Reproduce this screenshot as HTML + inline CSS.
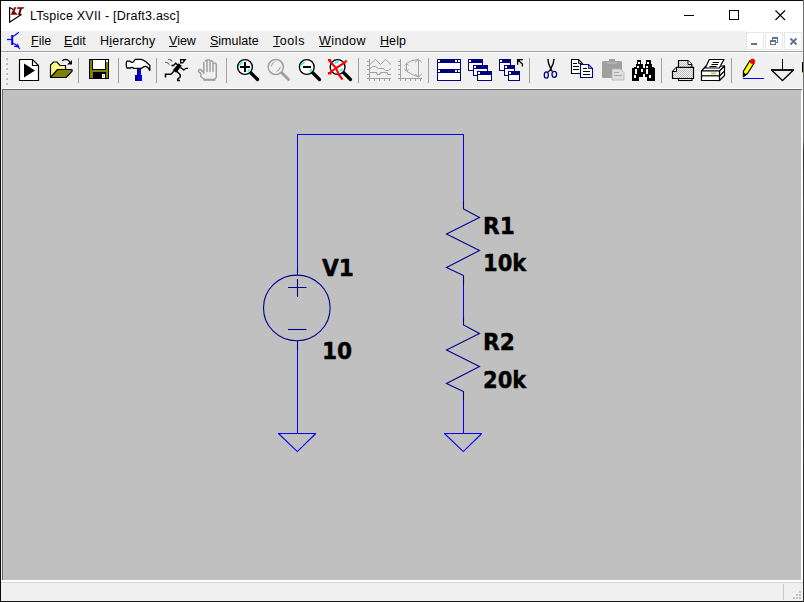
<!DOCTYPE html>
<html>
<head>
<meta charset="utf-8">
<title>LTspice XVII - [Draft3.asc]</title>
<style>
html,body{margin:0;padding:0;}
body{width:804px;height:602px;overflow:hidden;background:#fff;font-family:"Liberation Sans",sans-serif;}
#win{position:absolute;left:0;top:0;width:804px;height:602px;background:#fff;overflow:hidden;}
.abs{position:absolute;}
#bl{left:0;top:0;width:1px;height:602px;background:#0c0c10;}
#bt{left:0;top:0;width:804px;height:1px;background:#0c0c10;}
#br{left:803px;top:0;width:1px;height:602px;background:linear-gradient(#707070 0,#707070 140px,#303030 150px,#404040 200px,#2a2a2a 100%);}
#bb{left:0;top:601px;width:804px;height:1px;background:#1a1418;}
#title{left:30px;top:8px;font-size:12.5px;line-height:16px;color:#000;white-space:nowrap;letter-spacing:0.23px;}
#menubar{left:1px;top:31px;width:745px;height:20px;background:#f0f0f0;}
.mi{position:absolute;top:34px;font-size:12.5px;line-height:14px;color:#000;white-space:nowrap;}
.mi u{text-decoration:underline;text-underline-offset:1px;}
#sep1{left:1px;top:51px;width:802px;height:1px;background:#a0a0a0;}
#sep2{left:1px;top:52px;width:802px;height:1px;background:#fff;}
#toolbar{left:1px;top:53px;width:802px;height:35px;background:#f0f0f0;border-bottom:1px solid #fff;}
#canvas{left:3px;top:90px;width:798px;height:490px;background:#c0c0c0;}
#cvt{left:2px;top:89px;width:800px;height:1px;background:#696969;}
#cvl{left:2px;top:89px;width:1px;height:491px;background:#696969;}
#cvl0{left:1px;top:89px;width:1px;height:492px;background:#f0f0f0;}
#status{left:1px;top:582px;width:802px;height:19px;background:#f0f0f0;}
#stl{left:1px;top:582px;width:802px;height:1px;background:#d7d7d7;}
#stsep{left:783px;top:584px;width:1px;height:16px;background:#c8c8c8;}
.mdi{position:absolute;top:32px;width:16px;height:16px;border:1px solid #e6e6e6;background:#fff;}
svg{position:absolute;left:0;top:0;overflow:visible;}
.sch{font-family:"DejaVu Sans Condensed","DejaVu Sans","Liberation Sans",sans-serif;font-weight:bold;font-size:23px;fill:#000;stroke:#000;stroke-width:0.35px;}
</style>
</head>
<body>
<div id="win">
  <div class="abs" id="title">LTspice XVII - [Draft3.asc]</div>

  <div class="abs" id="menubar"></div>
  <div class="mi" style="left:31px"><u>F</u>ile</div>
  <div class="mi" style="left:64px;letter-spacing:0.08px"><u>E</u>dit</div>
  <div class="mi" style="left:100px;letter-spacing:0.22px">H<u>i</u>erarchy</div>
  <div class="mi" style="left:169px"><u>V</u>iew</div>
  <div class="mi" style="left:210px"><u>S</u>imulate</div>
  <div class="mi" style="left:273px;letter-spacing:0.56px"><u>T</u>ools</div>
  <div class="mi" style="left:319px;letter-spacing:0.4px"><u>W</u>indow</div>
  <div class="mi" style="left:380px;letter-spacing:0.08px"><u>H</u>elp</div>

  <div class="mdi" style="left:746px"></div>
  <div class="mdi" style="left:765px"></div>
  <div class="mdi" style="left:784px"></div>

  <div class="abs" id="sep1"></div>
  <div class="abs" id="sep2"></div>
  <div class="abs" id="toolbar"></div>

  <div class="abs" id="cvl0"></div>
  <div class="abs" id="cvt"></div>
  <div class="abs" id="cvl"></div>
  <div class="abs" id="canvas"></div>

  <div class="abs" id="status"></div>
  <div class="abs" id="stl"></div>
  <div class="abs" id="stsep"></div>

  <!-- ICONS_BEGIN --><svg width="804" height="602" viewBox="0 0 804 602">
    <defs>
      <pattern id="dy" width="2" height="2" patternUnits="userSpaceOnUse"><rect width="2" height="2" fill="#ffff00"/><rect width="1" height="1" fill="#fff"/><rect x="1" y="1" width="1" height="1" fill="#fff"/></pattern>
      <pattern id="dg" width="2" height="2" patternUnits="userSpaceOnUse"><rect width="2" height="2" fill="#fff"/><rect width="1" height="1" fill="#b8b8b8"/><rect x="1" y="1" width="1" height="1" fill="#b8b8b8"/></pattern>
    </defs>
    <!-- gripper -->
    <g shape-rendering="crispEdges">
      <g fill="#fff"><rect x="5" y="57" width="2" height="2"/><rect x="5" y="62" width="2" height="2"/><rect x="5" y="67" width="2" height="2"/><rect x="5" y="72" width="2" height="2"/><rect x="5" y="77" width="2" height="2"/><rect x="5" y="82" width="2" height="2"/></g>
      <g fill="#bcbcbc"><rect x="6" y="58" width="2" height="2"/><rect x="6" y="63" width="2" height="2"/><rect x="6" y="68" width="2" height="2"/><rect x="6" y="73" width="2" height="2"/><rect x="6" y="78" width="2" height="2"/><rect x="6" y="83" width="2" height="2"/></g>
      <!-- separators -->
      <g fill="#a0a0a0">
        <rect x="78" y="58" width="1" height="25"/><rect x="118" y="58" width="1" height="25"/><rect x="156" y="58" width="1" height="25"/><rect x="226" y="58" width="1" height="25"/><rect x="358" y="58" width="1" height="25"/><rect x="428" y="58" width="1" height="25"/><rect x="529" y="58" width="1" height="25"/><rect x="661" y="58" width="1" height="25"/><rect x="731" y="58" width="1" height="25"/>
      </g>
    </g>
    <!-- run -->
    <g>
      <path d="M19.5 59.5 H32.5 L38.5 65.5 V80.5 H19.5 Z" fill="#fff" stroke="#000" stroke-width="1.2"/>
      <path d="M32.5 59.5 V65.5 H38.5" fill="none" stroke="#000" stroke-width="1.2"/>
      <path d="M24 63.5 L35 70.5 L24 77.5 Z" fill="#000"/>
    </g>
    <!-- open -->
    <g>
      <path d="M50.5 77.5 V65 L53.5 62 H57 L60 65.5 H65.5 V70" fill="url(#dy)" stroke="#000" stroke-width="1.2"/>
      <path d="M50.5 77.5 L57.5 69.5 H72 V71.3 L66 77.5 Z" fill="#808000" stroke="#000" stroke-width="1.2" stroke-linejoin="round"/>
      <path d="M62.5 61 Q63 59.3 65.5 59.3 Q69.5 59.5 70 63.5" fill="none" stroke="#000" stroke-width="1.3"/>
      <path d="M67 64.5 H72 V60 Z" fill="#000"/>
    </g>
    <!-- save -->
    <g shape-rendering="crispEdges">
      <rect x="89" y="59" width="20" height="20" fill="#000"/>
      <rect x="90" y="60" width="18" height="18" fill="#808000"/>
      <rect x="92" y="59" width="14" height="11" fill="#000"/>
      <rect x="93" y="60" width="12" height="9" fill="#fff"/>
      <rect x="106" y="60" width="2" height="2" fill="#fff"/>
      <rect x="105" y="59" width="1" height="11" fill="#000"/>
      <rect x="93" y="72" width="13" height="7" fill="#000"/>
      <rect x="102" y="74" width="3" height="4" fill="#fff"/>
      <rect x="103" y="75" width="1" height="2" fill="#c0c0c0"/>
    </g>
    <!-- hammer -->
    <g>
      <path d="M127 61.2 H130 Q131.5 62.8 133 62.2 L135.3 59.4 H141.6 Q147 61.5 149.8 65.4 V70.6 Q148.5 67.6 146.2 66.4 Q144 66 141.5 68.3 H133.5 Q132 66.6 130.5 68 H127 Q126.2 67.5 126.3 64.6 Q126.2 61.6 127 61.2 Z" fill="#fff" stroke="#000" stroke-width="1.3" stroke-linejoin="round"/>
      <g shape-rendering="crispEdges">
        <rect x="137" y="69" width="2" height="6" fill="#000080"/><rect x="139" y="69" width="2" height="6" fill="#0000ff"/>
        <rect x="135" y="75" width="4" height="6" fill="#000080"/><rect x="139" y="75" width="3" height="6" fill="#0000ff"/>
      </g>
    </g>
    <!-- runner -->
    <g fill="none" stroke="#000" stroke-linecap="square">
      <path d="M180 59 H186.5 L183 63.5 H180 Z" fill="#000" stroke="none"/>
      <rect x="181.3" y="60.3" width="1.8" height="1.8" fill="#fff" stroke="none"/>
      <path d="M180.2 64.5 L174.5 71.3" stroke-width="4.2" stroke-linecap="butt"/>
      <path d="M178 65.3 L175.7 63.2 L173.5 65.5 H172" stroke-width="1.3"/>
      <path d="M181 67.8 L183.8 70 L186 68.3 H187.3" stroke-width="1.3"/>
      <path d="M174 71 L171 74.3 H165.5 V76.8" stroke-width="1.5"/>
      <path d="M177 71.5 L180.2 74.8 V77 L177.7 79.2 V80.4 H179.3" stroke-width="1.5"/>
      <path d="M168 59.5 H170.3 L172.3 61.5 M165 62.5 H167.3 L169.5 64.7" stroke="#707070" stroke-width="1.1" stroke-linecap="butt"/>
    </g>
    <!-- hand (disabled) -->
    <g fill="none" stroke="#a0a0a0" stroke-width="1.5" stroke-linecap="round" stroke-linejoin="round">
      <path d="M203.8 73 V62.5"/>
      <path d="M207 71.5 V60.5 Q208.5 59 210 60.5 V71.5"/>
      <path d="M205.5 61 Q206 59.8 207 60.5"/>
      <path d="M213 71.5 V62 L211.5 60.5"/>
      <path d="M214 63.3 H215.5 L216.3 64.5 V77.5 L214.8 79"/>
      <path d="M203.5 79.8 H215.5" stroke-width="2.2" stroke-linecap="butt"/>
      <path d="M203.8 72.6 L200.8 69.6 H199 L198.3 70.8 L199.3 72.3 L200.8 73.4 V76.5 L203.8 79"/>
    </g>
    <!-- zoom in -->
    <g>
      <path d="M250.5 72.5 L257.5 79.5" stroke="#000" stroke-width="3.2" stroke-linecap="round"/>
      <circle cx="245" cy="67" r="7.4" fill="#fff" stroke="#000" stroke-width="1.4"/>
      <path d="M239 65.5 L242.5 62" stroke="#00ffff" stroke-width="1.6"/>
      <path d="M247.5 71.5 L250 69.5" stroke="#00ffff" stroke-width="1.6"/>
      <path d="M240 67 H250 M245 62 V72" stroke="#000" stroke-width="2"/>
    </g>
    <!-- zoom grey -->
    <g>
      <path d="M281.5 72.5 L288.5 79.5" stroke="#a0a0a0" stroke-width="3" stroke-linecap="round"/>
      <circle cx="275.8" cy="67" r="7.6" fill="#f0f0f0" stroke="#a0a0a0" stroke-width="1.5"/>
      <path d="M271.5 66.5 Q271.5 63 274.5 62" fill="none" stroke="#a0a0a0" stroke-width="1"/>
      <path d="M276.5 71.5 Q279.5 71 280.5 66.5" fill="none" stroke="#a0a0a0" stroke-width="1"/>
    </g>
    <!-- zoom out -->
    <g>
      <path d="M312.5 72.5 L319.5 79.5" stroke="#000" stroke-width="3.2" stroke-linecap="round"/>
      <circle cx="306.8" cy="67" r="7.4" fill="#fff" stroke="#000" stroke-width="1.4"/>
      <path d="M300.5 65.5 L304.5 62" stroke="#00ffff" stroke-width="1.6"/>
      <path d="M309.5 71.5 L312 69.3" stroke="#00ffff" stroke-width="1.6"/>
      <path d="M303 67 H311" stroke="#000" stroke-width="2"/>
    </g>
    <!-- zoom fit (red X) -->
    <g>
      <path d="M343.5 72.5 L350.5 79.5" stroke="#000" stroke-width="3.2" stroke-linecap="round"/>
      <circle cx="337.6" cy="67" r="7.4" fill="#fff" stroke="#000" stroke-width="1.4"/>
      <path d="M334.5 63.5 Q336 62 338.5 62.3" fill="none" stroke="#00ffff" stroke-width="1.5"/>
      <path d="M339.5 71.5 L342.5 68.5" stroke="#00ffff" stroke-width="1.5"/>
      <path d="M328.5 59.5 L336 68 L339 75 L342.5 79.5" fill="none" stroke="#ff0000" stroke-width="2.1"/>
      <path d="M346.5 60.3 L345 62.5 L336 68 L329 73.5" fill="none" stroke="#ff0000" stroke-width="2.1"/>
      <rect x="328" y="59" width="3" height="2.2" fill="#ff0000"/>
      <rect x="328" y="72" width="3.5" height="2.5" fill="#ff0000"/>
    </g>
    <!-- graph 1 (disabled) -->
    <g fill="none" stroke="#a0a0a0" stroke-width="1">
      <g shape-rendering="crispEdges">
        <path d="M369.5 59 V81 M367 78.5 H391"/>
        <path d="M367 61.5 H369 M367 65.5 H369 M367 69.5 H369 M367 74.5 H369"/>
        <path d="M374.5 79 V81 M379.5 79 V81 M384.5 79 V81 M389.5 79 V81"/>
      </g>
      <path d="M370 64.5 L375.5 59.3 L380.5 64.5 L385.5 59.3 L391 64.5"/>
      <path d="M370 68.7 L372.8 66.5 H375.8 L378.3 68.5 H383 L385.8 70.5 H388.2 L391 68.5"/>
      <path d="M370 72.5 H376.3 L377.3 74.5 H379.5 L380.5 72.5 H387 L388 74.5 H391" stroke-width="1.2"/>
    </g>
    <!-- graph 2 (disabled) -->
    <g fill="none" stroke="#a0a0a0" stroke-width="1">
      <g shape-rendering="crispEdges">
        <path d="M400.5 59 V81 M398 78.5 H422"/>
        <path d="M398 61.5 H400 M398 65.5 H400 M398 69.5 H400 M398 74.5 H400"/>
        <path d="M405.5 79 V81 M410.5 79 V81 M415.5 79 V81 M420.5 79 V81"/>
        <path d="M418.5 59.5 V77 M406.5 63.5 V71"/>
      </g>
      <path d="M415 62.5 L418.5 59.3 L422 62.5 M415 73.8 L418.5 77 L422 73.8"/>
      <path d="M404.3 65.5 L406.5 63.3 L408.7 65.5 M404.3 69 L406.5 71.2 L408.7 69"/>
      <path d="M406.5 63.3 Q411 60 418.5 59.3 M406.5 71.2 Q411 74.5 418.5 77"/>
    </g>
    <!-- tile -->
    <g shape-rendering="crispEdges">
      <rect x="437.5" y="59.5" width="23" height="10" fill="#fff" stroke="#000080"/>
      <rect x="437.5" y="69.5" width="23" height="11" fill="#fff" stroke="#000080"/>
      <rect x="437" y="59" width="24" height="4" fill="#000080"/>
      <rect x="437" y="69" width="24" height="4" fill="#000080"/>
      <g fill="#fff"><rect x="438" y="60" width="2" height="2"/><rect x="455" y="60" width="2" height="2"/><rect x="458" y="60" width="2" height="2"/>
      <rect x="438" y="70" width="2" height="2"/><rect x="455" y="70" width="2" height="2"/><rect x="458" y="70" width="2" height="2"/></g>
    </g>
    <!-- cascade -->
    <g shape-rendering="crispEdges">
      <rect x="468.5" y="59.5" width="14" height="11" fill="#fff" stroke="#000080"/><rect x="468" y="59" width="15" height="4" fill="#000080"/><rect x="469" y="60" width="2" height="2" fill="#fff"/>
      <rect x="473.5" y="65.5" width="14" height="10" fill="#fff" stroke="#000080"/><rect x="473" y="65" width="15" height="4" fill="#000080"/><rect x="474" y="66" width="2" height="2" fill="#fff"/>
      <rect x="477.5" y="71.5" width="14" height="9" fill="#fff" stroke="#000080"/><rect x="477" y="71" width="15" height="4" fill="#000080"/><rect x="478" y="72" width="2" height="2" fill="#fff"/>
    </g>
    <!-- cascade + arrow -->
    <g shape-rendering="crispEdges">
      <rect x="499.5" y="59.5" width="11" height="11" fill="#fff" stroke="#000080"/><rect x="499" y="59" width="12" height="4" fill="#000080"/><rect x="500" y="60" width="2" height="2" fill="#fff"/>
      <rect x="504.5" y="65.5" width="10" height="10" fill="#fff" stroke="#000080"/><rect x="504" y="65" width="11" height="4" fill="#000080"/><rect x="505" y="66" width="2" height="2" fill="#fff"/>
      <rect x="508.5" y="71.5" width="11" height="9" fill="#fff" stroke="#000080"/><rect x="508" y="71" width="12" height="4" fill="#000080"/><rect x="509" y="72" width="2" height="2" fill="#fff"/>
    </g>
    <path d="M517.6 64.8 V59.6 H522.8 M518 60 L522.4 64 V66.6" fill="none" stroke="#000" stroke-width="1.3"/><path d="M517.6 59.6 H520.5 L517.6 62.5 Z" fill="#000"/>
    <!-- scissors -->
    <g fill="none">
      <path d="M548 59 L548.6 63.5 L551.6 70.5 M554 59 L553.2 63.5 L550 70.5" stroke="#000" stroke-width="1.4"/>
      <ellipse cx="546.3" cy="75" rx="2" ry="3.2" stroke="#000080" stroke-width="1.3"/>
      <ellipse cx="554.3" cy="74.3" rx="2.3" ry="3" stroke="#000080" stroke-width="1.3"/>
      <path d="M548 72 L550.5 70 M552.5 71.5 L551 70" stroke="#000080" stroke-width="1.2"/>
    </g>
    <!-- copy -->
    <g>
      <path d="M571.5 59.5 H578.5 L582.5 63.5 V73.5 H571.5 Z" fill="#fff" stroke="#000" stroke-width="1.1"/>
      <path d="M578.5 59.5 V63.5 H582.5 Z" fill="#a0a0a0" stroke="#000" stroke-width="0.8"/>
      <path d="M573 63.5 H577 M573 66.5 H579 M573 69.5 H579" stroke="#000" stroke-width="1" shape-rendering="crispEdges"/>
      <path d="M580.5 64.5 H588.5 L592.5 68.5 V77.5 H580.5 Z" fill="#fff" stroke="#000080" stroke-width="1.1"/>
      <path d="M588.5 64.5 V68.5 H592.5 Z" fill="#a0a0a0" stroke="#000080" stroke-width="0.8"/>
      <path d="M583 68.5 H587 M583 71.5 H590 M583 74.5 H590" stroke="#000" stroke-width="1" shape-rendering="crispEdges"/>
    </g>
    <!-- paste (disabled) -->
    <g>
      <rect x="602" y="61" width="20" height="17" rx="1.5" fill="#a0a0a0"/>
      <rect x="609" y="59" width="6" height="3" fill="#a0a0a0"/>
      <rect x="607" y="62.5" width="10" height="1" fill="#c4c4c4"/>
      <path d="M612 69 H620.5 L624 72.5 V80 H612 Z" fill="#dedede" stroke="#b4b4b4" stroke-width="0.8"/>
      <path d="M614 72.5 H618.5 M614 75.5 H621.5" stroke="#a8a8a8" stroke-width="1" shape-rendering="crispEdges"/>
    </g>
    <!-- binoculars -->
    <g shape-rendering="crispEdges" fill="#000">
      <rect x="637" y="60" width="4" height="5"/><rect x="636" y="64" width="7" height="4"/><rect x="634" y="67" width="9" height="2"/><rect x="632" y="68" width="11" height="9"/><rect x="632" y="77" width="7" height="4"/>
      <rect x="646" y="60" width="5" height="5"/><rect x="645" y="64" width="7" height="4"/><rect x="645" y="67" width="9" height="2"/><rect x="645" y="68" width="10" height="9"/><rect x="647" y="77" width="8" height="4"/>
      <rect x="643" y="68" width="2" height="6"/>
      <g fill="#fff">
        <rect x="638" y="62" width="2" height="2"/><rect x="637" y="66" width="2" height="2"/><rect x="635" y="69" width="2" height="5"/><rect x="641" y="69" width="2" height="3"/><rect x="634" y="75" width="2" height="3"/>
        <rect x="647" y="62" width="2" height="2"/><rect x="646" y="66" width="2" height="2"/><rect x="646" y="69" width="2" height="5"/><rect x="649" y="75" width="2" height="3"/>
      </g>
    </g>
    <!-- printer setup -->
    <g>
      <path d="M678.5 67 V60.5 H688 L691.8 64.5 V67" fill="url(#dg)" stroke="#000" stroke-width="1.2"/>
      <path d="M688 60.5 V64.5 H691.8" fill="#fff" stroke="#000" stroke-width="1"/>
      <path d="M672.5 71.5 L676.5 67.3 H693.5 V78.5 H672.5 Z" fill="url(#dg)" stroke="#000" stroke-width="1.2"/>
      <path d="M673 71.5 H676.5 V67.5" fill="#fff" stroke="#000" stroke-width="1"/>
      <rect x="678.5" y="78.5" width="13.5" height="2" fill="#fff" stroke="#000" stroke-width="1.1"/>
    </g>
    <!-- printer -->
    <g fill="#fff" stroke="#000" stroke-width="1.2" stroke-linejoin="round">
      <path d="M701.5 71 L706 66 H724.5 L719.5 71 Z"/>
      <path d="M719.5 71 L724.5 66 V75.5 L719.5 80.5 Z"/>
      <path d="M719.5 76 L724.5 71" fill="none"/>
      <rect x="701.5" y="71" width="18" height="9.5"/>
      <path d="M701.5 75.8 H719.5" fill="none"/>
      <path d="M709.3 59.5 H724 L719.3 68 H705.3 Z"/>
      <path d="M712.5 62.5 H719 M711.5 64.5 H718 M709.5 66.5 H716.5" fill="none" stroke-width="1.1"/>
      <path d="M711 74 H716" stroke="#e8e800" stroke-width="1.2"/>
      <path d="M711 73 H716" stroke="#9898b0" stroke-width="0.8"/>
    </g>
    <!-- pencil -->
    <g>
      <path d="M743 78.5 H764" stroke="#0000ff" stroke-width="1.2" shape-rendering="crispEdges"/>
      <path d="M743.3 76.8 L743.5 71 L750 60.5 L754 63.3 L747.5 73.5 Z" fill="#ffff00" stroke="#000" stroke-width="1.2" stroke-linejoin="round"/>
      <path d="M743.3 76.8 L743.5 72.5 L746.8 74.5 Z" fill="#000"/>
      <circle cx="752.5" cy="61.3" r="2.6" fill="#ff0000"/>
    </g>
    <!-- ground -->
    <g fill="none" stroke="#000">
      <path d="M782.5 59 V70" stroke-width="1.2" shape-rendering="crispEdges"/>
      <path d="M771 70 H794" stroke-width="1.8"/>
      <path d="M771.5 70 L782.5 80.5 L793.5 70" stroke-width="1.3"/>
    </g>
    <rect x="802" y="62" width="1" height="11" fill="#000"/><rect x="802" y="72" width="1" height="1" fill="#c0b000"/>
    <!-- title icon -->
    <g>
      <path d="M9.6 7.3 V22.3 L21.3 14.6" fill="none" stroke="#000" stroke-width="1.2" stroke-linejoin="round"/>
      <path d="M9.6 7.5 L13.2 9.6" fill="none" stroke="#000" stroke-width="1.1"/>
      <path d="M14.3 7.3 H16.2 L14.6 11.6 L18 14.7 H10.7 Z" fill="#800000"/>
      <path d="M17.2 7.3 H24.6 L23.3 8.8 H21.9 L20.1 14.7 H17.9 L19.7 8.8 H16.6 Z" fill="#800000"/>
      <path d="M19.5 14.3 L21.3 14.7" stroke="#000" stroke-width="1.4"/>
    </g>
    <!-- menu transistor icon -->
    <g fill="none" stroke="#0000ff">
      <path d="M7 39.5 H11.5" stroke-width="1.3"/>
      <path d="M12.2 35 V45" stroke-width="2"/>
      <path d="M13 36.3 L15 35.3 L18.8 32.2" stroke-width="1.1"/>
      <path d="M13 43.3 L15.5 44.5 L20 48.8" stroke-width="1.1"/>
      <path d="M14 46.3 H17.5 V43.8 L18.8 47 Z" fill="#0000ff" stroke-width="0.8"/>
    </g>
    <!-- window controls -->
    <g fill="none" stroke="#000" stroke-width="1">
      <path d="M684 15.5 H694" shape-rendering="crispEdges"/>
      <rect x="729.5" y="10.5" width="9" height="9" shape-rendering="crispEdges"/>
      <path d="M775.5 10.5 L785 20 M785 10.5 L775.5 20" stroke-width="1.1"/>
    </g>
    <!-- MDI glyphs -->
    <g fill="none" stroke="#60738f">
      <path d="M751 44 H757" stroke-width="2" shape-rendering="crispEdges"/>
      <g shape-rendering="crispEdges" stroke-width="1">
        <path d="M772.5 40 V37.5 H777.5 V42.5 H776" />
        <path d="M772 38 H778" />
        <rect x="770.5" y="40.5" width="5" height="4" fill="#fff"/>
        <path d="M770 41 H776"/>
      </g>
      <path d="M790.5 38.5 L796.5 44.5 M796.5 38.5 L790.5 44.5" stroke-width="1.9"/>
    </g>
    <!-- status grip -->
    <g fill="#bfbfbf" shape-rendering="crispEdges">
      <rect x="799" y="591" width="2" height="2"/>
      <rect x="796" y="594" width="2" height="2"/><rect x="799" y="594" width="2" height="2"/>
      <rect x="793" y="597" width="2" height="2"/><rect x="796" y="597" width="2" height="2"/><rect x="799" y="597" width="2" height="2"/>
    </g>
  </svg>
<!-- ICONS_END -->

  <svg width="804" height="602" viewBox="0 0 804 602">
    <g fill="none" stroke="#0000ff" stroke-width="1" shape-rendering="crispEdges">
      <path d="M297.5 268 V134.5 H463.5 V201"/>
      <path d="M297.5 350 V433"/>
      <path d="M463.5 285 V317"/>
      <path d="M463.5 400 V433"/>
      <path d="M278 433.5 H316"/>
      <path d="M444 433.5 H482"/>
    </g>
    <g fill="none" stroke="#0000ff" stroke-width="1.1">
      <path d="M278.5 433.5 L297.3 451.6 L315.8 433.5"/>
      <path d="M444.5 433.5 L463.3 451.6 L481.8 433.5"/>
    </g>
    <g fill="none" stroke="#000090" stroke-width="1.1">
      <path d="M297.5 268 V275"/>
      <path d="M297.5 341 V350"/>
      <ellipse cx="296.8" cy="307.9" rx="33.3" ry="32.8"/>
      <path d="M288 287.5 H306.5 M297.5 279 V297"/>
      <path d="M288 329.5 H306.5"/>
      <path d="M463.5 201 V209 L479.5 217.5 L446.5 234 L479.5 250.5 L446.5 267.5 L463.5 275.5 V285"/>
      <path d="M463.5 317 V325 L479.5 333.5 L446.5 350 L479.5 366.5 L446.5 383.5 L463.5 391.5 V400"/>
    </g>
    <text class="sch" transform="translate(322.0 276.1) scale(1.05 1)">V1</text>
    <text class="sch" transform="translate(322.0 359.1) scale(1.05 1)">10</text>
    <text class="sch" transform="translate(483.0 234.1) scale(1.05 1)">R1</text>
    <text class="sch" transform="translate(483.0 271.1) scale(1.02 1)">10k</text>
    <text class="sch" transform="translate(483.0 350.1) scale(1.05 1)">R2</text>
    <text class="sch" transform="translate(483.0 388.1) scale(1.02 1)">20k</text>
  </svg>

  <div class="abs" id="bt"></div>
  <div class="abs" id="bl"></div>
  <div class="abs" id="br"></div>
  <div class="abs" id="bb"></div>
</div>
</body>
</html>
